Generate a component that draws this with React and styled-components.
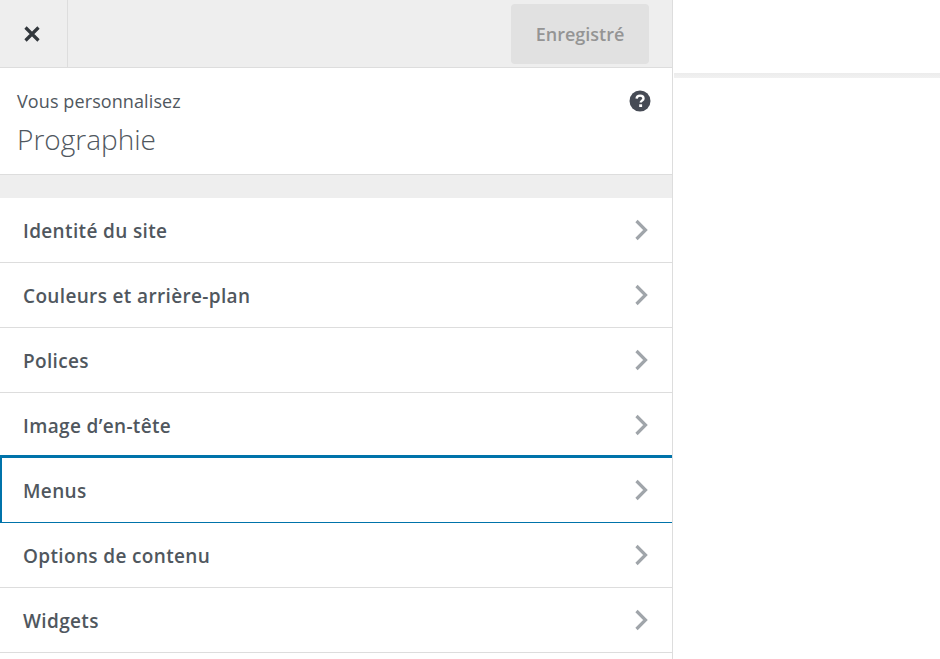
import React from 'react';
import styled, { createGlobalStyle } from 'styled-components';

const GlobalStyle = createGlobalStyle`
  html, body {
    margin: 0;
    height: 100%;
    background: #fff;
    overflow: hidden;
  }
  body {
    font-family: "Open Sans", "Noto Sans", sans-serif;
    color: #50575e;
  }
`

const Page = styled.div`
  display: flex;
  width: 940px;
  height: 659px;
  overflow: hidden;
`

const Sidebar = styled.div`
  width: 672px;
  flex-shrink: 0;
  border-right: 1px solid #ddd;
  background: #fff;
`

const Header = styled.div`
  height: 67px;
  display: flex;
  align-items: center;
  justify-content: space-between;
  padding-right: 23px;
  background: #eee;
  border-bottom: 1px solid #ddd;
`

const CloseButton = styled.div`
  width: 64px;
  height: 67px;
  padding-right: 3px;
  display: flex;
  align-items: center;
  justify-content: center;
  border-right: 1px solid #ddd;
  color: #32373c;
`

const SaveButton = styled.div`
  width: 138px;
  height: 60px;
  display: flex;
  align-items: center;
  justify-content: center;
  background: #e1e1e1;
  border-radius: 4px;
  color: #949494;
  font-size: 18px;
  font-weight: 600;
`

const Info = styled.div`
  height: 107px;
  box-sizing: border-box;
  padding: 20px 21px 0 17px;
  border-bottom: 1px solid #ddd;
  display: flex;
  justify-content: space-between;
  align-items: flex-start;
`

const InfoLabel = styled.div`
  font-size: 18px;
  line-height: 26px;
  letter-spacing: 0.1px;
  color: #50575e;
`

const SiteTitle = styled.div`
  font-size: 28px;
  font-weight: 300;
  line-height: 38px;
  margin-top: 6px;
  color: #50575e;
`

const HelpIcon = styled.svg`
  width: 22px;
  height: 22px;
  margin-top: 2px;
`

const Gap = styled.div`
  height: 23px;
  background: #eee;
`

const Row = styled.div`
  height: 65px;
  box-sizing: border-box;
  display: flex;
  align-items: center;
  justify-content: space-between;
  padding: 0 24px 0 23px;
  border-bottom: 1px solid #ddd;

  ${(p) => p.$focused && `
    margin-top: -3px;
    height: 68px;
    border-top: 3px solid #0073aa;
    border-bottom: 1px solid #0073aa;
    border-left: 2px solid #0073aa;
    padding-left: 21px;
  `}
`

const RowLabel = styled.span`
  margin-top: 2px;
  font-size: 19px;
  font-weight: 600;
  letter-spacing: 0.35px;
  color: #50575e;
`

const Chevron = styled.svg`
  width: 14px;
  height: 22px;
  flex-shrink: 0;
`

const Preview = styled.div`
  flex: 1;
  padding: 73px 0 0 1px;
`

const PreviewBar = styled.div`
  height: 5px;
  background: linear-gradient(#ececec, #f1f1f1);
`

const items = [
  'Identité du site',
  'Couleurs et arrière-plan',
  'Polices',
  'Image d’en-tête',
  'Menus',
  'Options de contenu',
  'Widgets',
];

const App = () => {
  return (
    <Page>
      <GlobalStyle />
      <Sidebar>
        <Header>
          <CloseButton>
            <svg width="18" height="18" viewBox="0 0 18 18">
              <path d="M2.5 2.5 L15.5 15.5 M15.5 2.5 L2.5 15.5" stroke="#32373c" strokeWidth="3.2" fill="none" />
            </svg>
          </CloseButton>
          <SaveButton>Enregistré</SaveButton>
        </Header>
        <Info>
          <div>
            <InfoLabel>Vous personnalisez</InfoLabel>
            <SiteTitle>Prographie</SiteTitle>
          </div>
          <HelpIcon viewBox="0 0 22 22">
            <circle cx="11" cy="11" r="10.5" fill="#464b55" />
            <path d="M7.6 8.6 C7.7 6.6 9.2 5.6 11.1 5.6 C13.1 5.6 14.5 6.7 14.5 8.4 C14.5 10.6 11.7 10.6 11.7 12.6" stroke="#fff" strokeWidth="2.4" fill="none" />
            <rect x="10.2" y="14.3" width="2.9" height="2.7" fill="#fff" />
          </HelpIcon>
        </Info>
        <Gap />
        {items.map((item) => (
          <Row key={item} $focused={item === 'Menus'}>
            <RowLabel>{item}</RowLabel>
            <Chevron viewBox="0 0 14 22">
              <path d="M2.5 2 L11.5 11 L2.5 20" stroke="#a0a5aa" strokeWidth="3.2" fill="none" />
            </Chevron>
          </Row>
        ))}
      </Sidebar>
      <Preview>
        <PreviewBar />
      </Preview>
    </Page>
  )
}

export default App;
